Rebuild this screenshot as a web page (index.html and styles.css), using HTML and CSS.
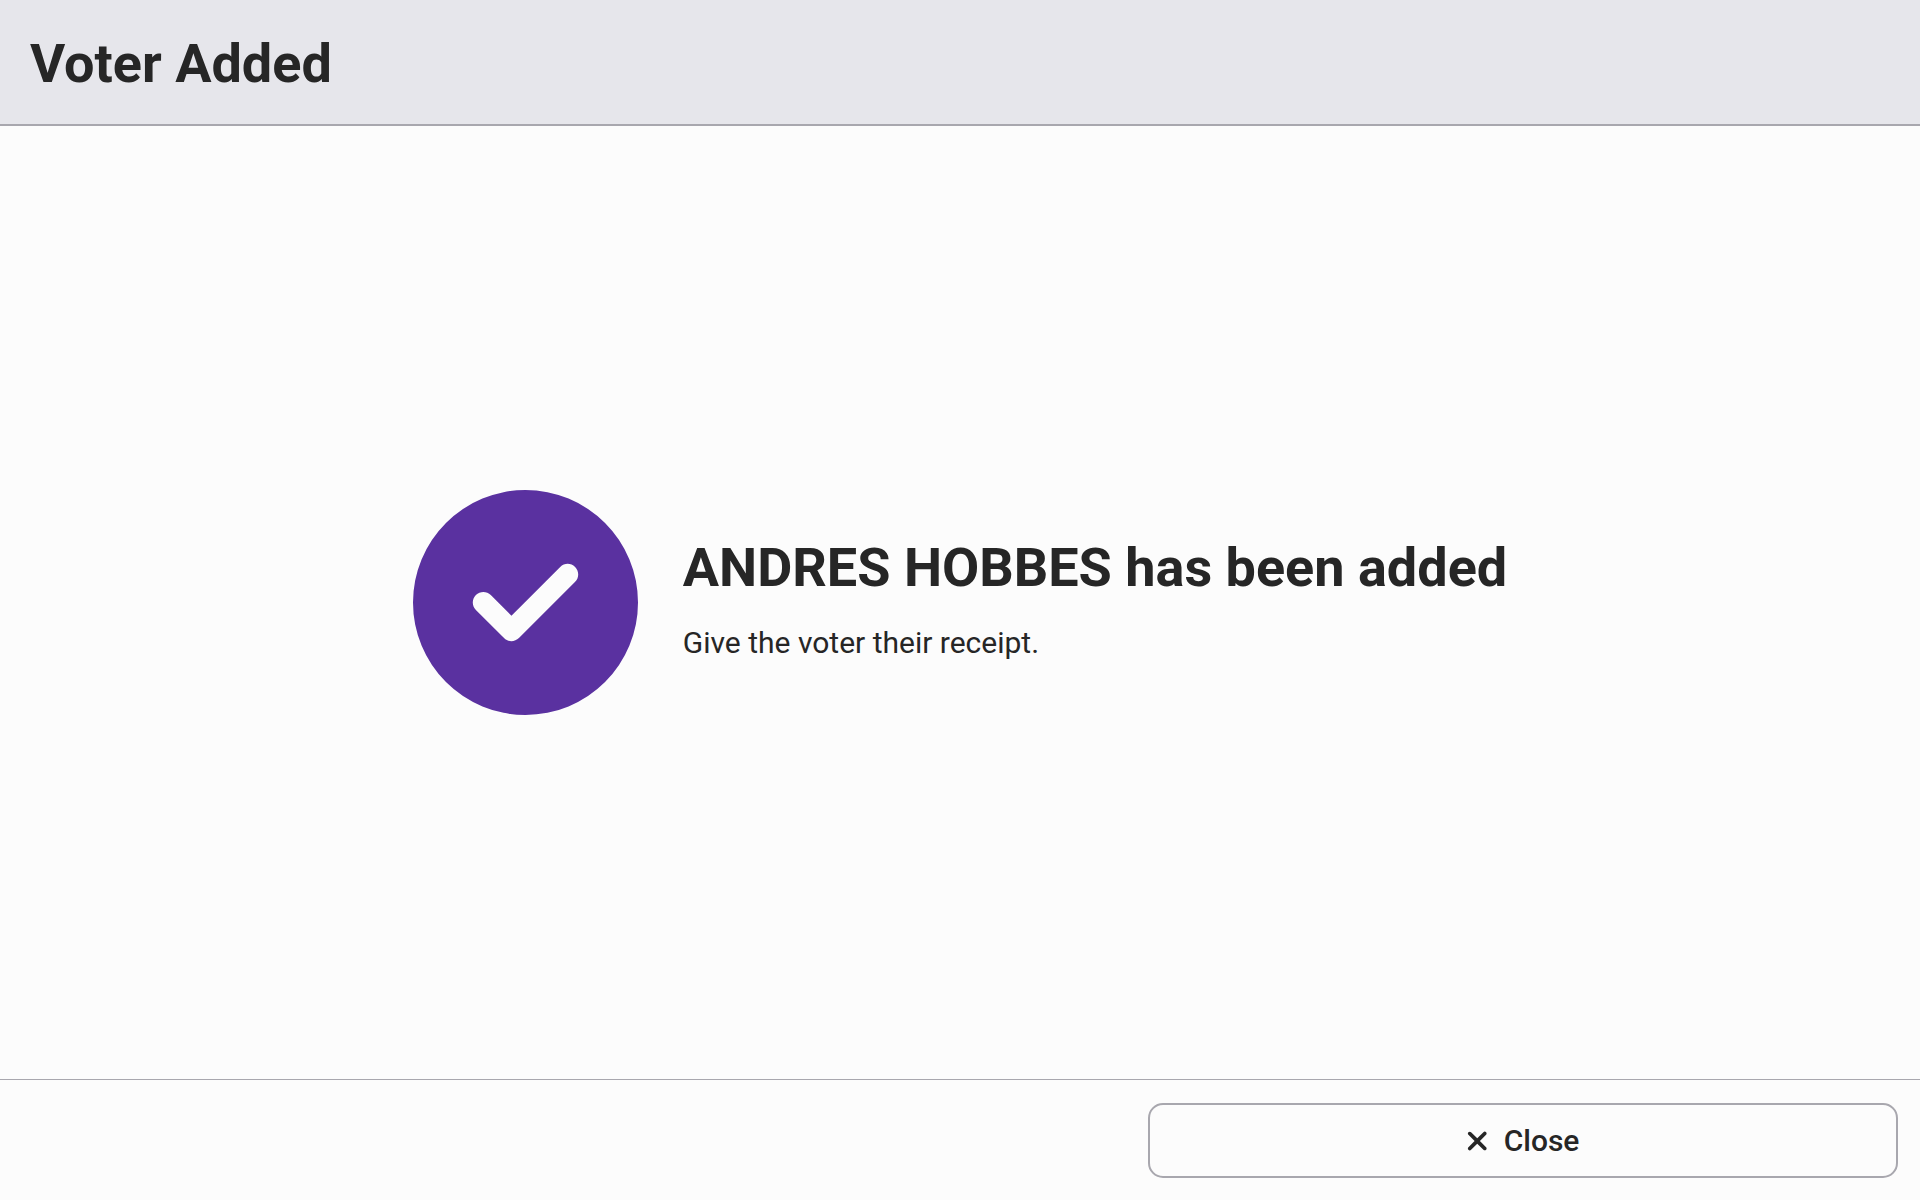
FILE: index.html
```html
<!DOCTYPE html>
<html lang="en">
<head>
<meta charset="utf-8">
<title>Voter Added</title>
<link rel="stylesheet" href="styles.css">
</head>
<body>
<header class="page-header">
  <h1 class="title">Voter Added</h1>
</header>
<main class="content">
  <svg class="status-icon" viewBox="0 0 512 512" aria-hidden="true"><path fill="currentColor" d="M256 512A256 256 0 1 0 256 0a256 256 0 1 0 0 512zM369 209L241 337c-9.400 9.400-24.600 9.400-33.900 0l-64-64c-9.400-9.400-9.400-24.600 0-33.900s24.600-9.400 33.900 0l47 47L335 175c9.400-9.400 24.600-9.400 33.900 0s9.400 24.600 0 33.900z"/></svg>
  <div class="message">
    <h2 class="title">ANDRES HOBBES has been added</h2>
    <p class="hint">Give the voter their receipt.</p>
  </div>
</main>
<footer class="actions">
  <button class="button" type="button">
    <svg class="button-icon" viewBox="0 0 384 512" aria-hidden="true"><path fill="currentColor" d="M342.600 150.600c12.500-12.500 12.500-32.800 0-45.300s-32.800-12.500-45.300 0L192 210.700 86.600 105.400c-12.500-12.500-32.800-12.500-45.300 0s-12.500 32.800 0 45.300L146.700 256 41.400 361.400c-12.500 12.500-12.500 32.800 0 45.300s32.800 12.500 45.300 0L192 301.300 297.400 406.600c12.500 12.500 32.800 12.500 45.300 0s12.500-32.800 0-45.300L237.300 256 342.600 150.600z"/></svg>
    Close
  </button>
</footer>
</body>
</html>
```
FILE: styles.css
```css
* {
  box-sizing: border-box;
}

body {
  margin: 0;
  min-height: 100vh;
  display: flex;
  flex-direction: column;
  background: #fcfcfc;
  color: #262626;
  font: 30px/36px Roboto, sans-serif;
}

.page-header {
  padding: 32px 30px 28px;
  background: #e6e6eb;
  border-bottom: 2px solid #a8a7ae;
}

.title {
  margin: 0;
  font-size: 54px;
  line-height: 64px;
  font-weight: 700;
}

.content {
  flex: 1;
  display: flex;
  align-items: center;
  justify-content: center;
  gap: 45px;
}

.status-icon {
  width: 225px;
  height: 225px;
  color: #5a31a0;
}

.message {
  display: flex;
  flex-direction: column;
  gap: 25px;
  padding-bottom: 9px;
}

.hint {
  margin: 0;
}

.actions {
  display: grid;
  grid-template-columns: 3fr 2fr;
  padding: 23px 22px 22px;
  border-top: 1px solid #a8a7ae;
}

.button {
  grid-column: 2;
  display: flex;
  align-items: center;
  justify-content: center;
  gap: 15px;
  min-height: 75px;
  background: none;
  border: 2px solid #a8a7ae;
  border-radius: 15px;
  color: inherit;
  font: inherit;
  font-weight: 500;
}

.button-icon {
  height: 30px;
}
```
